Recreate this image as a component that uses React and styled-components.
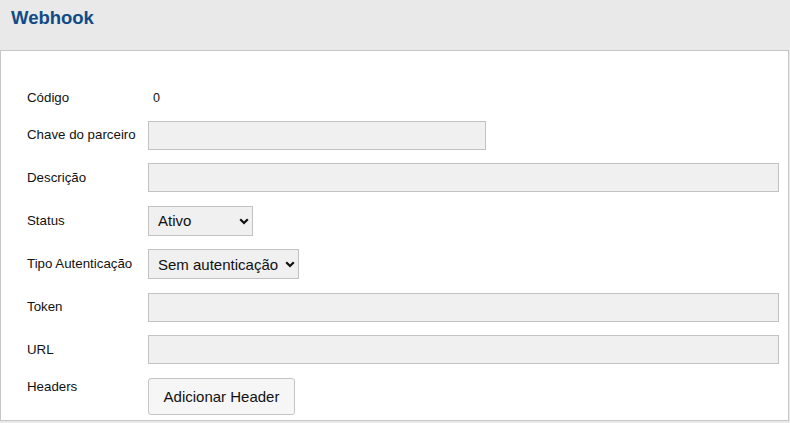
import styled, { createGlobalStyle } from 'styled-components'

const Global = createGlobalStyle`
  html, body {
    margin: 0;
    padding: 0;
    background: #e9e9e9;
    font-family: 'Liberation Sans', Arial, sans-serif;
  }
`

export default function App() {
  return (
    <Page>
      <Global />
      <Header>
        <Titulo>Webhook</Titulo>
      </Header>
      <Painel>
        <Linha $altura={18}>
          <Rotulo>Código</Rotulo>
          <Valor>0</Valor>
        </Linha>
        <Linha>
          <Rotulo>Chave do parceiro</Rotulo>
          <Campo $largura={338} />
        </Linha>
        <Linha>
          <Rotulo>Descrição</Rotulo>
          <Campo />
        </Linha>
        <Linha>
          <Rotulo>Status</Rotulo>
          <SelectBox $largura={105}>
            <Select defaultValue="ativo">
              <option value="ativo">Ativo</option>
              <option value="inativo">Inativo</option>
            </Select>
            <Seta />
          </SelectBox>
        </Linha>
        <Linha>
          <Rotulo>Tipo Autenticação</Rotulo>
          <SelectBox $largura={151}>
            <Select defaultValue="sem">
              <option value="sem">Sem autenticação</option>
              <option value="token">Token</option>
            </Select>
            <Seta />
          </SelectBox>
        </Linha>
        <Linha>
          <Rotulo>Token</Rotulo>
          <Campo />
        </Linha>
        <Linha>
          <Rotulo>URL</Rotulo>
          <Campo />
        </Linha>
        <Linha $topo>
          <Rotulo>Headers</Rotulo>
          <Botao>Adicionar Header</Botao>
        </Linha>
      </Painel>
    </Page>
  )
}

function Seta() {
  return (
    <SetaIcone width="10" height="7" viewBox="0 0 10 7">
      <path d="M1.2 1.2 L5 5 L8.8 1.2" fill="none" stroke="#111" strokeWidth="2.2" />
    </SetaIcone>
  )
}

const Page = styled.div`
  width: 790px;
  height: 423px;
  overflow: hidden;
`

const Header = styled.div`
  height: 50px;
  padding: 7px 11px 0;
  box-sizing: border-box;
  background: #e9e9e9;
`

const Titulo = styled.h1`
  margin: 0;
  font-size: 18.5px;
  font-weight: 700;
  line-height: 21px;
  color: #114b86;
`

const Painel = styled.div`
  width: 789px;
  height: 371px;
  box-sizing: border-box;
  background: #fff;
  border: 1px solid #c6c6c6;
  padding: 38px 9px 0 26px;
  display: flex;
  flex-direction: column;
  gap: 13.5px;
`

const Linha = styled.div`
  display: flex;
  align-items: ${p => (p.$topo ? 'flex-start' : 'center')};
  min-height: ${p => (p.$altura ? `${p.$altura}px` : 'auto')};
`

const Rotulo = styled.label`
  width: 121px;
  flex-shrink: 0;
  font-size: 13.3px;
  line-height: 18px;
  color: #111;
`

const Valor = styled.span`
  padding-left: 5px;
  font-size: 12.5px;
  color: #111;
`

const Campo = styled.input`
  height: 29px;
  box-sizing: border-box;
  width: ${p => (p.$largura ? `${p.$largura}px` : '100%')};
  background: #f0f0f0;
  border: 1px solid #c2c2c2;
  border-radius: 0;
  outline: none;
`

const SelectBox = styled.div`
  position: relative;
  width: ${p => p.$largura}px;
  height: 30px;
`

const Select = styled.select`
  appearance: none;
  width: 100%;
  height: 100%;
  box-sizing: border-box;
  padding: 0 0 0 9px;
  background: #f0f0f0;
  border: 1px solid #c2c2c2;
  border-radius: 0;
  font-family: 'Liberation Sans', Arial, sans-serif;
  font-size: 15px;
  color: #111;
  outline: none;
`

const SetaIcone = styled.svg`
  position: absolute;
  right: 4px;
  top: 12px;
  pointer-events: none;
`

const Botao = styled.button`
  height: 37px;
  width: 147px;
  padding: 0;
  background: #f6f6f6;
  border: 1px solid #c4c4c4;
  border-radius: 3px;
  font-family: 'Liberation Sans', Arial, sans-serif;
  font-size: 15px;
  color: #111;
`
